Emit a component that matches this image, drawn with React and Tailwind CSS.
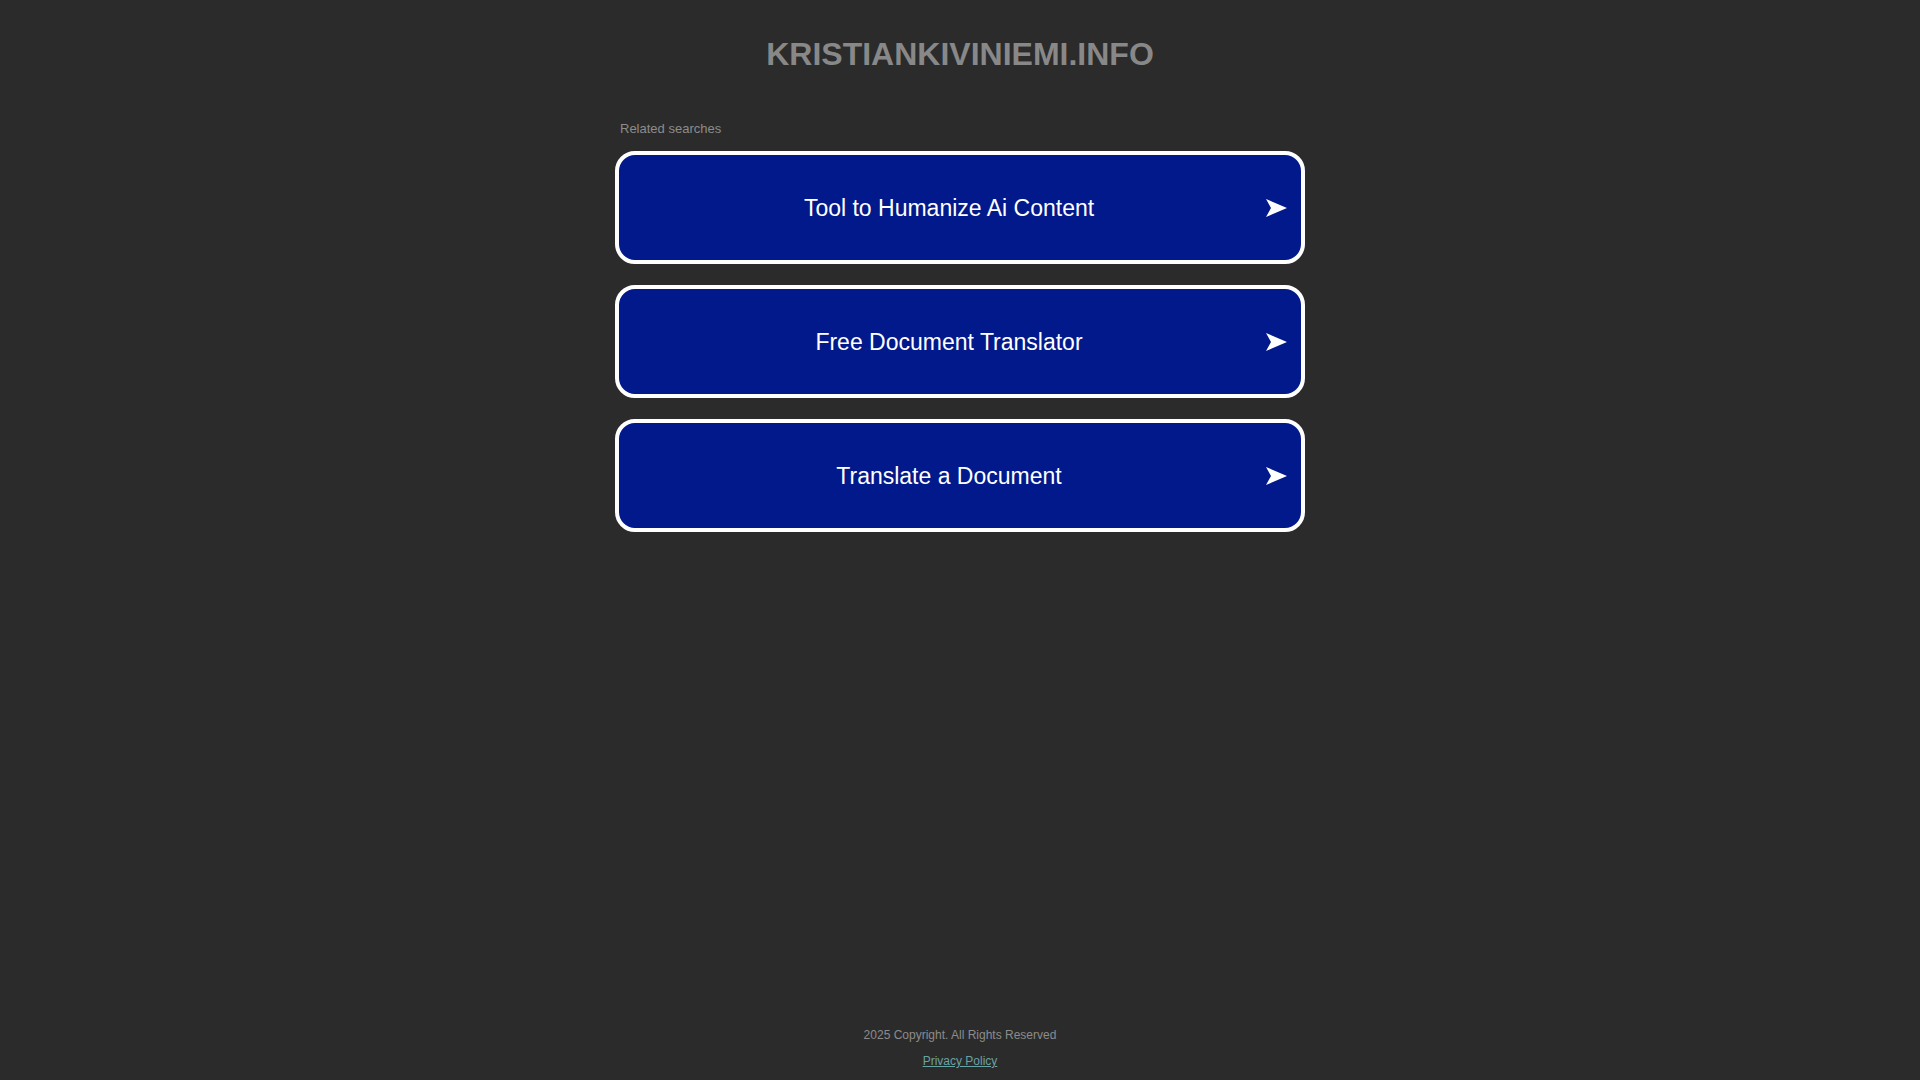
import React from "react";

const items = [
  "Tool to Humanize Ai Content",
  "Free Document Translator",
  "Translate a Document",
];

function Arrow() {
  return (
    <svg width="21" height="18" viewBox="0 0 21 18" className="shrink-0">
      <path d="M0 0 L21 9 L0 18 L5 9 Z" fill="#ffffff" />
    </svg>
  );
}

export default function App() {
  return (
    <div
      className="min-h-screen bg-[#2b2b2b] flex flex-col"
      style={{ fontFamily: '"Liberation Sans", Arial, sans-serif' }}
    >
      <h1 className="pt-[36px] text-[32px] leading-[36px] font-bold text-[#888888] text-center">
        KRISTIANKIVINIEMI.INFO
      </h1>
      <div className="mx-auto w-[690px] mt-[49px]">
        <div className="pl-[5px] text-[13px] leading-[16px] text-[#8c8c8c]">
          Related searches
        </div>
        <div className="mt-[14px] flex flex-col gap-[21px]">
          {items.map((t) => (
            <a
              key={t}
              href="#"
              className="h-[113px] border-4 border-white rounded-[20px] bg-[#01198a] flex items-center pl-[13px] pr-[14px]"
            >
              <span className="flex-1 text-center text-white text-[23px] leading-[28px] pt-[1px]">
                {t}
              </span>
              <Arrow />
            </a>
          ))}
        </div>
      </div>
      <div className="mt-auto pb-[11px] flex flex-col items-center gap-[10px] text-[12px] leading-[16px]">
        <div className="text-[#8c8c8c]">2025 Copyright. All Rights Reserved</div>
        <a href="#" className="underline text-[#68a3a4]">
          Privacy Policy
        </a>
      </div>
    </div>
  );
}
